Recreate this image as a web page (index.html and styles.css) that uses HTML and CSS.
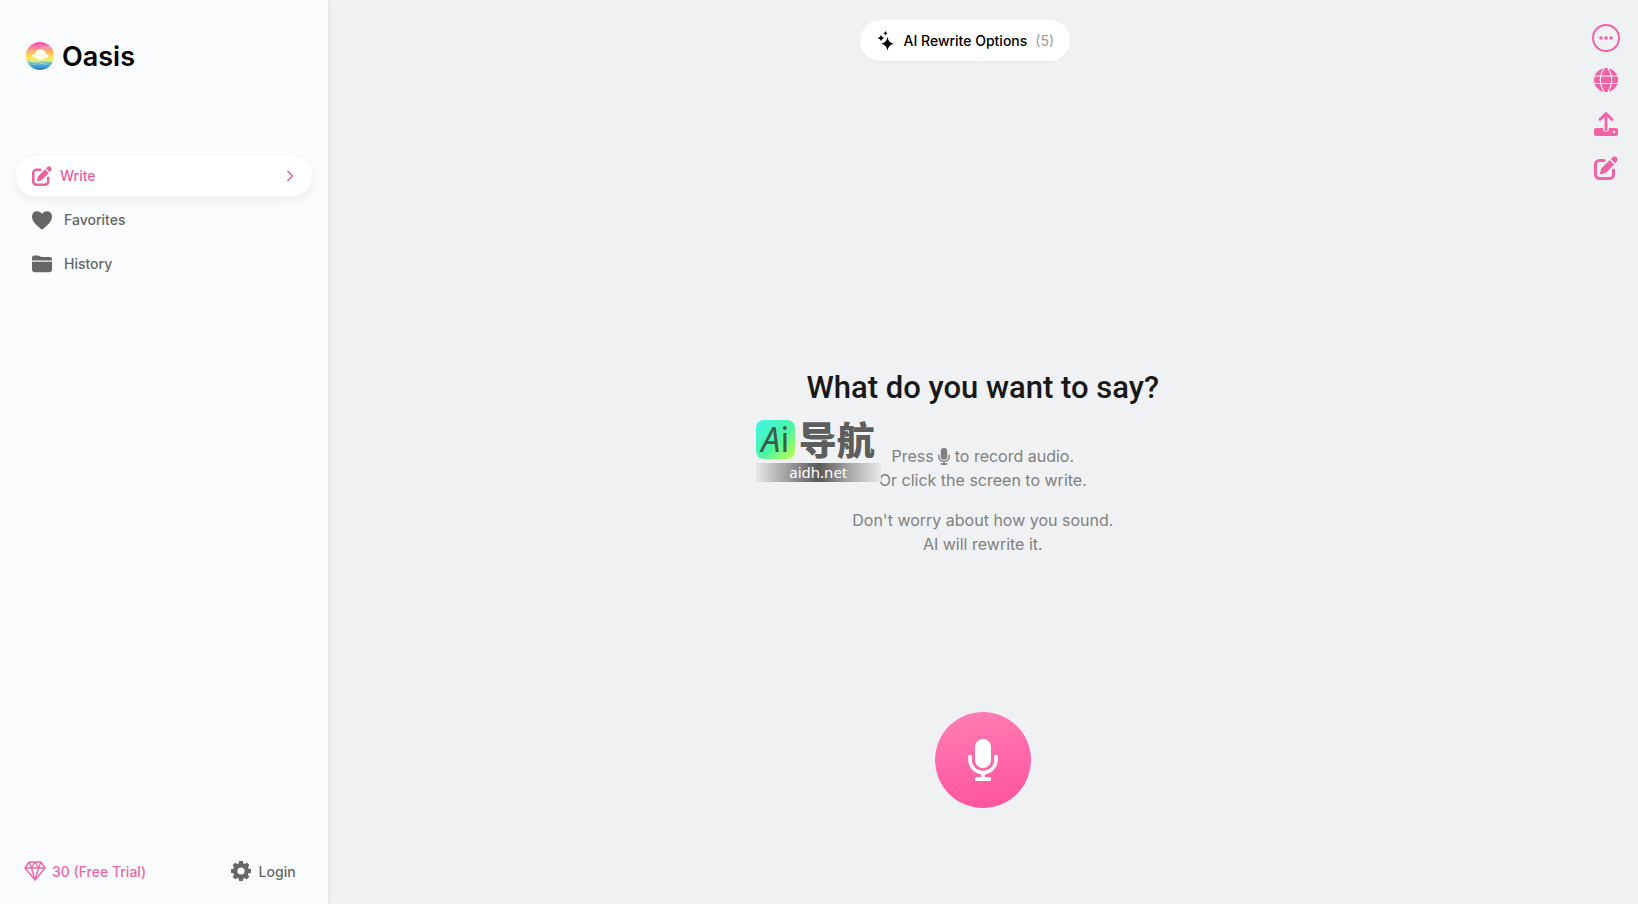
FILE: index.html
```html
<!DOCTYPE html>
<html lang="en">
<head>
    <meta charset="UTF-8">
    <meta name="viewport" content="width=device-width, initial-scale=1.0">
    <title>Oasis</title>
    <link rel="stylesheet" href="styles.css">
</head>
<body>
    <!-- shared icons -->
    <svg class="sprite" aria-hidden="true">
        <symbol id="icon-edit" viewBox="0 0 24 24">
            <path d="M10 4.500H5.500a4 4 0 0 0-4 4v10a4 4 0 0 0 4 4h10a4 4 0 0 0 4-4V14" fill="none" stroke="currentColor" stroke-width="3" stroke-linecap="round"/>
            <path d="M6 17.200l1-3.800q.2-.8.8-1.400l8-8 4.400 4.400-8 8q-.6.6-1.400.8l-3.800 1q-1.200.2-1-1z" fill="currentColor"/>
            <path d="M16.800 3l1.900-1.900a3 3 0 0 1 4.200 4.200L21 7.200z" fill="currentColor"/>
        </symbol>
        <symbol id="icon-mic" viewBox="0 0 30 42">
            <rect x="7" y="0" width="16" height="29" rx="8" fill="currentColor"/>
            <path d="M2 17.500v3.500a13 12.500 0 0 0 26 0v-3.500M15 34v5" fill="none" stroke="currentColor" stroke-width="3.600" stroke-linecap="round"/>
            <rect x="7" y="38" width="16" height="4" rx="1.600" fill="currentColor"/>
        </symbol>
    </svg>

    <div class="app">
        <aside class="sidebar">
            <a class="brand" href="#">
                <svg class="brand-logo" viewBox="0 0 28 28" aria-hidden="true">
                    <defs>
                        <linearGradient id="sunset" x1="0" y1="0" x2="0" y2="1">
                            <stop offset="0" stop-color="#ee4fb4"/>
                            <stop offset=".2" stop-color="#fb7f9c"/>
                            <stop offset=".36" stop-color="#fdb85c"/>
                            <stop offset=".58" stop-color="#fdec4e"/>
                            <stop offset=".7" stop-color="#c4e48a"/>
                            <stop offset=".82" stop-color="#4fb3dc"/>
                            <stop offset="1" stop-color="#2673c8"/>
                        </linearGradient>
                        <clipPath id="disc"><circle cx="14" cy="14" r="14"/></clipPath>
                    </defs>
                    <g clip-path="url(#disc)">
                        <rect width="28" height="28" fill="url(#sunset)"/>
                        <path d="M12 5l16-1v2l-11 1zM0 9l9-1-4 2H0z" fill="#ffc0b0" opacity=".5"/>
                        <circle cx="14.500" cy="12.500" r="5.500" fill="#fffbe8"/>
                        <path d="M5 14q3-3 6-2 5-2 7 0 4-1 5 3l-6 2-7-1z" fill="#fffbe8"/>
                        <path d="M3 19h11l4-1h8M6 22l8-1 6 1" fill="none" stroke="#eaf8c8" opacity=".5"/>
                        <path d="M0 20l9 1.500 5-.5M15 20.500l13 1" fill="none" stroke="#2f8fd0" opacity=".5"/>
                    </g>
                </svg>
                <span>Oasis</span>
            </a>

            <nav class="menu">
                <a class="menu-item active" href="#">
                    <svg class="icon"><use href="#icon-edit"/></svg>
                    <span>Write</span>
                    <svg class="chevron" viewBox="0 0 12 12"><path d="M3.500 1l5 5-5 5" fill="none" stroke="currentColor" stroke-width="1.500"/></svg>
                </a>
                <a class="menu-item" href="#">
                    <svg class="icon" viewBox="0 0 20 20"><path d="M10 19.500Q9.400 19.500 5 15.600 0 11.200 0 6.800 0 1.200 5.200 1.200 8.500 1.200 10 3.700 11.500 1.200 14.800 1.200 20 1.200 20 6.800q0 4.400-5 8.800-4.400 3.900-5 3.900z" fill="currentColor"/></svg>
                    <span>Favorites</span>
                </a>
                <a class="menu-item" href="#">
                    <svg class="icon" viewBox="0 0 20 20"><path d="M0 6.500V4a2.500 2.500 0 0 1 2.500-2.500H6q1 0 1.800.7l.5.400q.5.400 1.200.400h8A2.500 2.500 0 0 1 20 5.500v1zM0 7.800h20V15a3.200 3.200 0 0 1-3.200 3.200H3.200A3.200 3.200 0 0 1 0 15z" fill="currentColor"/></svg>
                    <span>History</span>
                </a>
            </nav>

            <div class="account">
                <a class="account-link credits" href="#">
                    <svg class="gem" viewBox="0 0 22 20"><path d="M5 1h12l4 6-10 12L1 7zM1 7h20M5 1l2.500 6L11 1l3.500 6L17 1M7.500 7L11 19l3.500-12" fill="none" stroke="currentColor" stroke-width="1.400" stroke-linejoin="round"/></svg>
                    <span>30 (Free Trial)</span>
                </a>
                <a class="account-link" href="#">
                    <svg class="icon" viewBox="0 0 20 20">
                        <g fill="none" stroke="currentColor">
                            <circle cx="10" cy="10" r="5.800" stroke-width="4.400"/>
                            <path d="M10 0v4M10 16v4M0 10h4M16 10h4M2.900 2.900l2.900 2.900M14.200 14.200l2.900 2.900M2.900 17.100l2.900-2.900M14.200 5.800l2.900-2.900" stroke-width="4"/>
                        </g>
                    </svg>
                    <span>Login</span>
                </a>
            </div>
        </aside>

        <main class="main">
            <div class="stage">
                <div class="topbar">
                    <button class="options" type="button">
                        <svg class="icon" viewBox="0 0 20 20"><path d="M11.500 6q.9 5.600 6.500 6.800-5.600 1.100-6.500 6.800-.9-5.700-6.500-6.800 5.600-1.200 6.500-6.800zM5 3.500q.5 3 3.500 3.500-3 .5-3.500 3.500Q4.500 7.500 1.500 7 4.500 6.500 5 3.500zM9.500 0q.3 1.800 2.200 2.200-1.900.3-2.200 2.200-.3-1.900-2.200-2.200Q9.200 1.800 9.500 0z" fill="currentColor"/></svg>
                        <span>AI Rewrite Options</span>
                        <span class="count">(5)</span>
                    </button>
                </div>

                <section class="hero">
                    <h1>What do you want to say?</h1>
                    <p>Press <svg class="mic-inline"><use href="#icon-mic"/></svg> to record audio.<br>Or click the screen to write.</p>
                    <p>Don't worry about how you sound.<br>AI will rewrite it.</p>
                    <div class="badge">
                        <div class="badge-top">
                            <span class="badge-logo"><i>A</i>i</span>
                            <span class="badge-name" lang="zh">导航</span>
                        </div>
                        <div class="badge-url">aidh.net</div>
                    </div>
                </section>

                <button class="record" type="button" aria-label="Record">
                    <svg class="record-icon"><use href="#icon-mic"/></svg>
                </button>
            </div>

            <div class="tools">
                <button class="tool more" type="button" aria-label="More">
                    <svg viewBox="0 0 28 28"><circle cx="14" cy="14" r="13" fill="none" stroke="currentColor" stroke-width="2"/><g fill="currentColor"><circle cx="9" cy="14" r="1.800"/><circle cx="14" cy="14" r="1.800"/><circle cx="19" cy="14" r="1.800"/></g></svg>
                </button>
                <button class="tool" type="button" aria-label="Language">
                    <svg viewBox="0 0 24 24"><circle cx="12" cy="12" r="12" fill="currentColor"/><path class="globe-line" d="M0 8h24M0 15.500h24M10 0Q2.500 12 10 24M14 0q7.500 12 0 24"/></svg>
                </button>
                <button class="tool" type="button" aria-label="Upload">
                    <svg viewBox="0 0 24 24"><path d="M12 18V2M6 7.500l6-6 6 6" fill="none" stroke="currentColor" stroke-width="2.800" stroke-linecap="round" stroke-linejoin="round"/><path d="M2 16h7.200v1.200a2.800 2.800 0 0 0 5.600 0V16H22a2 2 0 0 1 2 2v4a2 2 0 0 1-2 2H2a2 2 0 0 1-2-2v-4a2 2 0 0 1 2-2z" fill="currentColor"/><circle class="dot" cx="20" cy="20" r="1.200"/></svg>
                </button>
                <button class="tool" type="button" aria-label="New note">
                    <svg><use href="#icon-edit"/></svg>
                </button>
            </div>
        </main>
    </div>
</body>
</html>
```
FILE: styles.css
```css
* {
    box-sizing: border-box;
}
body {
    margin: 0;
    font-family: Inter, "Liberation Sans", sans-serif;
    font-size: 14px;
    font-weight: 500;
    color: #666;
    background: #eff1f3;
}
a {
    color: inherit;
    text-decoration: none;
}
button {
    border: 0;
    padding: 0;
    background: none;
    font: inherit;
    color: inherit;
    cursor: pointer;
}
.sprite {
    position: absolute;
    width: 0;
    height: 0;
}
.icon {
    width: 20px;
    height: 20px;
    flex: none;
}
.app {
    display: flex;
    min-height: 100vh;
}

/* sidebar */
.sidebar {
    display: flex;
    flex-direction: column;
    width: 20%;
    padding: 36px 16px 12px;
    background: #f9fbfd;
    box-shadow: 0 0 6px rgba(0, 0, 0, 0.1);
}
.brand {
    display: flex;
    align-items: center;
    gap: 8px;
    height: 40px;
    padding: 0 10px;
    margin-bottom: 80px;
    font-size: 27px;
    font-weight: 600;
    color: #000;
}
.brand-logo {
    width: 28px;
    height: 28px;
}
.menu {
    display: flex;
    flex-direction: column;
    gap: 4px;
    flex: 1;
}
.menu-item {
    display: flex;
    align-items: center;
    gap: 12px;
    height: 40px;
    padding: 0 16px;
    border-radius: 20px;
}
.menu-item.active {
    gap: 8px;
    color: #e861a0;
    background: #fff;
    box-shadow: 0 4px 12px rgba(0, 0, 0, 0.06);
}
.menu-item span {
    padding-bottom: 2px;
}
.chevron {
    width: 12px;
    height: 12px;
    margin-left: auto;
}
.account {
    display: flex;
    align-items: center;
    justify-content: space-between;
    height: 42px;
    padding: 0 16px 0 8px;
}
.account-link {
    display: flex;
    align-items: center;
    gap: 8px;
}
.credits {
    gap: 6px;
    color: #ee68a7;
}
.gem {
    width: 22px;
    height: 20px;
}

/* main area */
.main {
    flex: 1;
    display: grid;
    grid-template-columns: 64px 1fr 64px;
}
.stage {
    grid-column: 2;
    display: flex;
    flex-direction: column;
    align-items: center;
    padding: 20px 0 96px;
}
.topbar {
    padding-right: 36px;
}
.options {
    display: flex;
    align-items: center;
    gap: 8px;
    height: 41px;
    padding: 0 16px;
    border-radius: 21px;
    background: #fff;
    color: #000;
    box-shadow: 0 1px 3px rgba(0, 0, 0, 0.04);
}
.count {
    font-weight: 400;
    color: #999;
}
.hero {
    position: relative;
    flex: 1;
    display: flex;
    flex-direction: column;
    justify-content: flex-end;
    width: 100%;
    padding-bottom: 156px;
    text-align: center;
    font-size: 16px;
    font-weight: 400;
    line-height: 24px;
    color: #808080;
}
.hero h1 {
    margin: 0 0 20px;
    font-family: Roboto, Inter, sans-serif;
    font-size: 31px;
    font-weight: 500;
    line-height: 40px;
    color: #181818;
}
.hero p {
    margin: 16px 0 0;
}
.mic-inline {
    width: 12px;
    height: 17px;
    vertical-align: -3px;
}
.record {
    display: flex;
    align-items: center;
    justify-content: center;
    width: 96px;
    height: 96px;
    border-radius: 50%;
    color: #fff;
    background: linear-gradient(170deg, #ff7eb5, #ff529c);
}
.record-icon {
    width: 30px;
    height: 42px;
}

/* badge floating over the hero text */
.badge {
    position: absolute;
    left: calc(50% - 227px);
    bottom: 230px;
    width: 125px;
    color: #5c5f5e;
}
.badge-top {
    display: flex;
    align-items: center;
    gap: 4px;
    height: 39px;
    margin-bottom: 4px;
}
.badge-logo {
    width: 39px;
    height: 39px;
    border-radius: 8px;
    font-family: "Noto Sans", sans-serif;
    font-size: 34px;
    line-height: 39px;
    color: #3d5a50;
    background: linear-gradient(135deg, #3ff5ec, #4df5a0 55%, #c0ff4a);
}
.badge-name {
    font-family: "Noto Sans CJK SC", sans-serif;
    font-size: 38px;
    font-weight: 900;
    line-height: 36px;
    padding-bottom: 3px;
    text-shadow: 0 0 2px #fff, 0 0 2px #fff;
}
.badge-url {
    font-family: "Noto Sans", sans-serif;
    font-size: 15px;
    line-height: 19px;
    color: #fff;
    background: linear-gradient(90deg, #e6e7e8, #a0a0a0 25%, #585858 50%, #a8a8a8 75%, #e8e9ea);
}

/* right toolbar */
.tools {
    display: flex;
    flex-direction: column;
    align-items: center;
    padding-top: 18px;
}
.tool {
    display: flex;
    align-items: center;
    justify-content: center;
    width: 44px;
    height: 44px;
    color: #f263a5;
}
.tool svg {
    width: 24px;
    height: 24px;
}
.tool.more {
    height: 40px;
}
.tool.more svg {
    width: 28px;
    height: 28px;
}
.globe-line {
    fill: none;
    stroke: #eff1f3;
    stroke-width: 1.2;
}
.dot {
    fill: #eff1f3;
}
```
